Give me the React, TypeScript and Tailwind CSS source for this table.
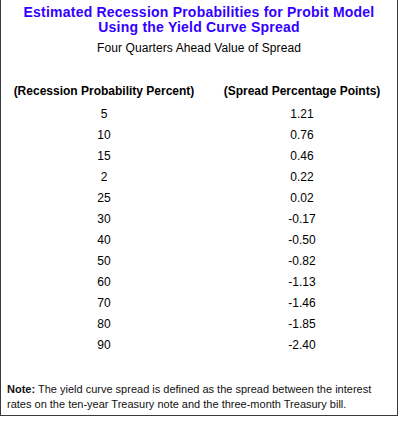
const rows: [string, string][] = [
  ['5', '1.21'],
  ['10', '0.76'],
  ['15', '0.46'],
  ['2', '0.22'],
  ['25', '0.02'],
  ['30', '-0.17'],
  ['40', '-0.50'],
  ['50', '-0.82'],
  ['60', '-1.13'],
  ['70', '-1.46'],
  ['80', '-1.85'],
  ['90', '-2.40'],
];

export default function App() {
  return (
    <div className="w-[400px] h-[433px] bg-white font-['Liberation_Sans',Arial,sans-serif] text-black">
      <div className="w-[398px] border-l border-r border-b border-[#3a3a3a] pt-[5px] pb-[3px]">
        {/* Title */}
        <h1 className="text-center text-[14px] leading-[15px] font-bold tracking-[0.22px] text-[#3300ff]">
          Estimated Recession Probabilities for Probit Model
          <br />
          Using the Yield Curve Spread
        </h1>
        <p className="mt-[6px] text-center text-[12px] leading-[14px] tracking-[0.1px]">Four Quarters Ahead Value of Spread</p>

        {/* Table */}
        <div className="mt-[26px] grid grid-cols-[206px_190px] text-[12px] leading-[21px] text-center">
          <div className="font-bold pb-[2px]">(Recession Probability Percent)</div>
          <div className="font-bold pb-[2px]">(Spread Percentage Points)</div>
          {rows.map(([p, s]) => (
            <div key={p} className="contents">
              <div>{p}</div>
              <div>{s}</div>
            </div>
          ))}
        </div>

        {/* Note */}
        <p className="mt-[26px] px-[6px] text-[11px] leading-[15px] text-[#111]">
          <span className="font-bold">Note:</span> The yield curve spread is defined as the spread between the interest
          rates on the ten-year Treasury note and the three-month Treasury bill.
        </p>
      </div>
    </div>
  );
}
